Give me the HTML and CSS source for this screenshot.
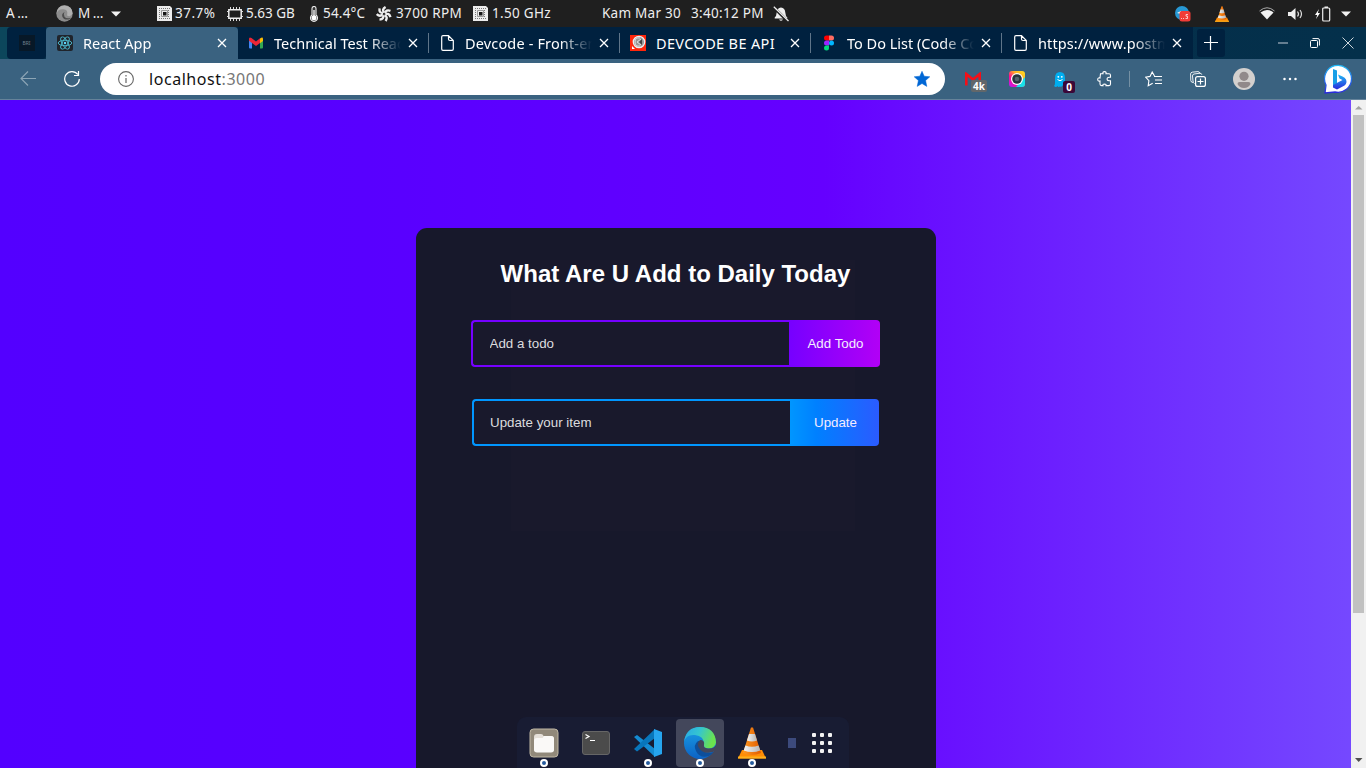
FILE: index.html
```html
<!DOCTYPE html>
<html lang="en">
<head>
<meta charset="utf-8">
<title>React App</title>
<link rel="stylesheet" href="styles.css">
</head>
<body>
<svg width="0" height="0" class="defs">
  <defs>
    <linearGradient id="edgeTop" x1="0" y1="0" x2="1" y2=".3"><stop offset="0" stop-color="#28a7e8"/><stop offset=".5" stop-color="#35c5d0"/><stop offset="1" stop-color="#6be34e"/></linearGradient>
    <linearGradient id="edgeLow" x1="0" y1="0" x2="0" y2="1"><stop offset="0" stop-color="#1aa0e6"/><stop offset="1" stop-color="#0c62c4"/></linearGradient>
    <linearGradient id="cone" x1="0" x2="1"><stop offset="0" stop-color="#ff9a20"/><stop offset="1" stop-color="#e05a00"/></linearGradient>
    <linearGradient id="coneBand" x1="0" x2="1"><stop offset="0" stop-color="#f4f4f4"/><stop offset="1" stop-color="#b5b5b5"/></linearGradient>
    <linearGradient id="bing" x1="0" y1="0" x2="0" y2="1"><stop offset="0" stop-color="#20b9f5"/><stop offset="1" stop-color="#2929dc"/></linearGradient>
    <linearGradient id="rainbow" x1="0" y1="1" x2="1" y2="0"><stop offset="0" stop-color="#b41cff"/><stop offset=".35" stop-color="#ff0c8e"/><stop offset=".65" stop-color="#ffb022"/><stop offset="1" stop-color="#ffe022"/></linearGradient>
    <symbol id="vlc" viewBox="0 0 28 32">
      <path d="M4 23h20l4 8.500H0z" fill="#ff8d05"/><path d="M0 29.500h28v2H0z" fill="#ffb01c"/>
      <path d="M13 .5h2L23 26q-9 4-18 0z" fill="url(#cone)"/>
      <path d="M11 7h6l2 6.500q-5 2-10 0z" fill="url(#coneBand)"/><path d="M7.400 18.500q6.600 2.500 13.200 0l1.700 5q-8.300 3.200-16.600 0z" fill="url(#coneBand)"/>
    </symbol>
    <symbol id="chip" viewBox="0 0 15 15"><path d="M0 0h13l2 2v13H0z" fill="#ececec"/><path d="M2 2.500h11M2 4.500h2M2 6.500h2M2 8.500h2M2 10.500h2M2 12.500h11M11 4.500h2M11 6.500h2M11 8.500h2M11 10.500h2" stroke="#777" stroke-dasharray="1 1"/><path d="M4.500 4.500h6v6h-6z" fill="#ececec" stroke="#999"/><path d="M6 6h3.500v3.500H6z" fill="#161616"/></symbol>
    <symbol id="close" viewBox="0 0 10 10"><path d="M1 1l8 8M9 1L1 9" stroke="#fff" stroke-width="1.300"/></symbol>
    <symbol id="page" viewBox="0 0 13 16"><path d="M.7 2q0-1.300 1.300-1.300h5.500l4.800 4.800V14q0 1.300-1.300 1.300H2Q.7 15.300.7 14zM7.500.7V4q0 1.500 1.500 1.500h3.300" fill="none" stroke="#fff" stroke-width="1.200"/></symbol>
  </defs>
</svg>
<div class="desktop">
  <header class="panel">
    <span class="ls-a">A…</span>
    <svg width="17" height="17" viewBox="0 0 32 32"><circle cx="16" cy="16" r="15.500" fill="#8c8c8c"/><path d="M1 16Q4 7 14 8q9 1 7 10-1 3 4 3 5-1 6-5 0-14-15-15Q3 1 1 16z" fill="#b0b0b0"/><path d="M16 13q-6 3-4 9 3 7 13 5 3-2 3-3-8 3-12-2-3-5 0-9z" fill="#4c4c4c"/></svg>
    <span class="ls-m">M…</span>
    <svg width="10" height="6"><path d="M0 .5h10L5 5.500z" fill="#f2f2f2"/></svg>
    <svg width="15" height="15"><use href="#chip"/></svg>
    <span class="pct">37.7%</span>
    <svg class="ram" width="16" height="14"><path d="M1.800 2.800h12.400v8.400H1.800z" fill="none" stroke="#eee" stroke-width="1.500"/><path d="M3.500 0v2M6.500 0v2M9.500 0v2M12.500 0v2M3.500 12v2M6.500 12v2M9.500 12v2M12.500 12v2" stroke="#ddd"/><path d="M0 4.500h1M0 9.500h1M15 4.500h1M15 9.500h1" stroke="#ddd"/></svg>
    <span class="mem">5.63 GB</span>
    <svg class="thermo" width="10" height="16"><path d="M3 2.500a2 2 0 0 1 4 0V9a3.500 3.500 0 1 1-4 0z" fill="#333" stroke="#eee" stroke-width="1.100"/><circle cx="5" cy="11.700" r="2.500" fill="#fff"/><path d="M5 4v7" stroke="#fff" stroke-width="1.300"/></svg>
    <span class="temp">54.4°C</span>
    <svg width="16" height="16" viewBox="-8 -8 16 16"><g fill="none" stroke="#efefef" stroke-width="2.400"><path id="blade" d="M.2-1.500Q-2.600-4.500 1.600-7"/><use href="#blade" transform="rotate(51)"/><use href="#blade" transform="rotate(103)"/><use href="#blade" transform="rotate(154)"/><use href="#blade" transform="rotate(206)"/><use href="#blade" transform="rotate(257)"/><use href="#blade" transform="rotate(309)"/></g></svg>
    <span class="rpm">3700 RPM</span>
    <svg width="15" height="15"><use href="#chip"/></svg>
    <span class="ghz">1.50 GHz</span>
    <span class="date">Kam Mar 30</span>
    <span class="time">3:40:12 PM</span>
    <svg width="16" height="16"><path d="M8 1.500q4 .5 4.300 5 .2 3.500 2 5V12.500H1.700v-1q1.800-1.500 2-5Q4 2 8 1.500zM6 13.500h4Q8 16 6 13.500z" fill="#eee"/><path d="M.8 1.500L15 15.500" stroke="#1f1f1f" stroke-width="3"/><path d="M.8.800L15.500 15" stroke="#eee" stroke-width="1.300"/></svg>
    <svg width="16" height="16"><circle cx="7" cy="7" r="7" fill="#2798d4"/><path d="M2 7l4-2v3z" fill="#fff"/><rect x="4.500" y="5" width="11" height="10.500" rx="2.500" fill="#f23c37"/><path d="M6 12.500h1M8 12.500h1M13 8.500h-2v1.700h1.500v2.300H10.500" stroke="#fff" stroke-width=".7" fill="none"/></svg>
    <svg width="14" height="16"><use href="#vlc"/></svg>
    <svg width="16" height="13"><path d="M.5 4Q8-2.500 15.500 4" fill="none" stroke="#aaa"/><path d="M1.500 5.500Q8 .5 14.500 5.500L8 12.500z" fill="#f2f2f2"/></svg>
    <svg width="16" height="14"><path d="M0 5h3l4.500-4v12L3 9H0z" fill="#eee"/><path d="M9.500 4.500q2 2.500 0 5M12 3q3 4 0 8" fill="none" stroke="#ddd" stroke-width="1.200"/></svg>
    <svg width="16" height="16"><path d="M4 3L0 9h2.200L1 13l4-6H2.800z" fill="#fff"/><path d="M7.700 3q0-1 1-1h5q1 0 1 1v11q0 1-1 1h-5q-1 0-1-1zM9.500 1h3.500" fill="none" stroke="#eee" stroke-width="1.200"/></svg>
    <svg width="10" height="6"><path d="M0 .5h10L5 5.500z" fill="#f2f2f2"/></svg>
  </header>

  <nav class="tabs">
    <div class="pinned"><span class="pin-icon">BRI</span></div>
    <div class="tab active">
      <svg width="16" height="16" viewBox="-8 -8 16 16"><rect x="-8" y="-8" width="16" height="16" rx="2" fill="#20242b"/><g fill="none" stroke="#4dbcd1" stroke-width=".9"><ellipse rx="6.800" ry="2.700"/><ellipse rx="6.800" ry="2.700" transform="rotate(60)"/><ellipse rx="6.800" ry="2.700" transform="rotate(120)"/></g><circle r="1.200" fill="#61dafb"/></svg>
      <span class="label">React App</span><svg class="x"><use href="#close"/></svg>
    </div>
    <div class="tab">
      <svg width="16" height="16"><path d="M1 3.500L4 6v7.500H2q-1 0-1-1z" fill="#4285f4"/><path d="M12 6l3-2.500v9q0 1-1 1h-2z" fill="#34a853"/><path d="M12 3.500q3-2 3 .5v2l-3 2.300z" fill="#fbbc04"/><path d="M1 4q0-2.500 2.500-1L8 6.500 12 3.300v4.800L8 11 4 8 1 5.800z" fill="#ea2535"/></svg>
      <span class="label">Technical Test Reac</span><svg class="x"><use href="#close"/></svg>
    </div>
    <div class="tab">
      <svg width="16" height="16"><use href="#page" width="13" height="16" x="2"/></svg>
      <span class="label t-dev">Devcode - Front-en</span><svg class="x"><use href="#close"/></svg>
    </div>
    <div class="tab">
      <svg width="16" height="16"><path d="M0 0h16v16H0z" fill="#ff260b"/><circle cx="9" cy="7" r="5.700" fill="#999" stroke="#eee" stroke-width="1.300"/><path d="M11 4L7 7l4 3M10 3q-5-1-5 4t5 4" fill="none" stroke="#ddd"/><path d="M9 7l3-3v6z" fill="#444"/><path d="M2 11l3 3H2z" fill="#fff"/></svg>
      <span class="label t-be">DEVCODE BE API</span><svg class="x"><use href="#close"/></svg>
    </div>
    <div class="tab">
      <svg width="16" height="16"><path d="M8 .5v5H5.500a2.500 2.500 0 0 1 0-5z" fill="#ff0000"/><path d="M8 .5h2.500a2.500 2.500 0 0 1 0 5H8z" fill="#ff6b61"/><path d="M8 5.500v5H5.500a2.500 2.500 0 0 1 0-5z" fill="#9a24ff"/><circle cx="10.500" cy="8" r="2.500" fill="#00b6ff"/><path d="M8 10.500V13a2.500 2.500 0 1 1-2.500-2.500z" fill="#00d97e"/></svg>
      <span class="label">To Do List (Code Co</span><svg class="x"><use href="#close"/></svg>
    </div>
    <div class="tab">
      <svg width="16" height="16"><use href="#page" width="13" height="16" x="2"/></svg>
      <span class="label t-url">https://www.postm</span><svg class="x"><use href="#close"/></svg>
    </div>
    <div class="newtab"><svg width="14" height="14"><path d="M6.500 0v14M0 6.500h14" stroke="#fff" stroke-width="1.200"/></svg></div>
    <div class="winctl">
      <svg width="10" height="10"><path d="M0 5h10" stroke="#8499a8" stroke-width="1.500"/></svg>
      <svg width="10" height="10"><path d="M.5 3.500q0-1 1-1h5q1 0 1 1v5q0 1-1 1h-5q-1 0-1-1zM2.500.6H8Q9.400.6 9.400 2v5.500" fill="none" stroke="#fff"/></svg>
      <svg width="12" height="12"><path d="M.5.500l11 11M11.500.500L.5 11.500" stroke="#ccd6dc"/></svg>
    </div>
  </nav>

  <div class="toolbar">
    <svg width="16" height="16"><path d="M16 7.500H1M8 .5l-7 7 7 7" fill="none" stroke="#8da5b5" stroke-width="1.100"/></svg>
    <svg width="16" height="16"><path d="M13.800 3.500A7.300 7.300 0 1 0 15.300 8M14.500 0v4.500H10" fill="none" stroke="#fff" stroke-width="1.200"/></svg>
    <div class="address">
      <svg width="16" height="16"><circle cx="8" cy="8" r="7.400" fill="none" stroke="#666" stroke-width="1.100"/><path d="M8 7v5M8 4v1.400" stroke="#666" stroke-width="1.200"/></svg>
      <span class="url">localhost<span>:3000</span></span>
      <svg class="fav" width="16" height="16"><path d="M8 .3l2.200 4.900 5.600.6-4.200 3.700 1.200 5.900L8 12.500l-4.800 2.900 1.200-5.900L.2 5.800l5.600-.6z" fill="#0067d5" stroke="#0067d5" stroke-linejoin="round" stroke-width=".5"/></svg>
    </div>
    <div class="ext"><svg width="16" height="14"><path d="M1.300 13.500V2L8 7.500 14.700 2v11.500" fill="none" stroke="#f40f18" stroke-width="2.600"/></svg><b class="badge grey">4k</b></div>
    <svg width="16" height="16"><rect width="16" height="16" rx="3" fill="url(#rainbow)"/><path d="M16 6v7q0 3-3 3H7z" fill="#18dfe9"/><circle cx="8" cy="8" r="6" fill="#fff"/><circle cx="8" cy="8" r="4.800" fill="#26353e"/><circle cx="8" cy="8" r="2.300" fill="#52636d"/></svg>
    <div class="ext"><svg width="12" height="15"><path d="M1 6q0-6 5-6t5 6v8q-1.500.5-2-1-1 2.500-3 1.500-2 1-2.500-.5-1.500 2-3.500 0 1-1 1-3z" fill="#00aef0"/><circle cx="4.300" cy="4.800" r=".9" fill="#fff"/><circle cx="7.800" cy="4.800" r=".9" fill="#fff"/><path d="M3.500 7.500Q6 10 8.500 7.500" fill="none" stroke="#fff"/></svg><b class="badge plum">0</b></div>
    <svg width="16" height="16"><path d="M3.500 2.700H6Q5.500.6 7.500.6T9 2.700h3q1.500 0 1.500 1.500v2H12q-2 .2-2 1.800t2 1.800h1.500v3.300q0 1.500-1.500 1.500H9q.5-1.500-1.500-1.500T6 14.600H4.500Q3 14.600 3 13v-3Q.7 10.500.7 8.500T3 7z" fill="none" stroke="#fff" stroke-width="1.100"/></svg>
    <i class="divider"></i>
    <svg width="17" height="16"><path d="M9.500 5L7.200 1 5 5.400l-4.400.8 3.300 3.500-.7 5 4.500-2.500M9 5.500h8M10 9h7M10 12.500h7" fill="none" stroke="#fff" stroke-width="1.100"/></svg>
    <svg width="16" height="16"><path d="M3 11.500Q1 11.500.8 9.500L.6 3q0-1.500 1.500-1.800L8 .6q1.500 0 1.800 1.800M4.500 12.500Q3.200 12 3 10L2.500 5Q2.500 3.200 4 3l6-.8q1.500 0 1.800 1.500" fill="none" stroke="#fff" stroke-width=".9"/><rect x="5.600" y="5.600" width="9.800" height="9.800" rx="2" fill="#3a6280" stroke="#fff" stroke-width="1.200"/><path d="M10.500 7.500v6M7.500 10.500h6" stroke="#fff" stroke-width="1.200"/></svg>
    <svg width="22" height="22"><circle cx="11" cy="11" r="11" fill="#d3d0ce"/><circle cx="11" cy="8.300" r="4.600" fill="#91898a"/><path d="M4.500 16q0-2 2-2h9q2 0 2 2-2 4-6.500 4t-6.500-4z" fill="#91898a"/></svg>
    <svg width="14" height="4"><g fill="#fff"><circle cx="1.500" cy="2" r="1.250"/><circle cx="7" cy="2" r="1.250"/><circle cx="12.500" cy="2" r="1.250"/></g></svg>
    <svg class="bing" width="30" height="30"><path d="M1 29l1-8A13.500 13.500 0 1 1 11 28z" fill="#fff" stroke="url(#bing)" stroke-width="1.300"/><path d="M9 5l4 1.500v14L9 23z" fill="#189fe7"/><path d="M14 10.500l1.500 4 3 1.500-9.500 5v2.500l4 2 7.500-4q3-2.500 1.500-6-1-2-3.500-3z" fill="url(#bing)"/></svg>
  </div>

  <main class="viewport">
    <div class="page">
      <section class="card">
        <h1>What Are U Add to Daily Today</h1>
        <form class="todo-form add">
          <input type="text" placeholder="Add a todo"><button type="button">Add Todo</button>
        </form>
        <form class="todo-form edit">
          <input type="text" placeholder="Update your item"><button type="button">Update</button>
        </form>
      </section>
    </div>
    <div class="scrollbar">
      <svg width="15" height="15"><path d="M4 9.500h7.500L7.700 6z" fill="#a3a3a3"/></svg>
      <i class="thumb"></i>
      <svg class="down" width="15" height="15"><path d="M4 5h7.500L7.700 9z" fill="#505050"/></svg>
    </div>
  </main>

  <aside class="dock">
    <div class="app run"><svg width="30" height="30"><rect x="1" y="1" width="28" height="28" rx="3.500" fill="#91897a" stroke="#c0b8a5"/><path d="M5 9q0-3 3-3h4q2 0 2.500 2H22q3 0 3 3v10q0 3-3 3H8q-3 0-3-3z" fill="#e5e0d9"/><rect x="5" y="10" width="20" height="14.500" rx="3" fill="#faf9f7"/><path d="M13 11l2-3h7q3 0 3 3v4H13z" fill="#faf9f7"/></svg></div>
    <div class="app"><svg width="30" height="26"><rect x="1.500" y="1.500" width="27" height="23" rx="2.500" fill="#4b4b4b" stroke="#666"/><path d="M4.500 4.500l3.500 2-3.500 2M9 10.500h5" fill="none" stroke="#fff" stroke-width="1.200"/></svg></div>
    <div class="app run"><svg width="30" height="28"><path d="M1 8l3-2 18 14v8z" fill="#148bd2"/><path d="M1 20l3 2.500L22 9V0z" fill="#0876bb"/><path d="M21 0l8 3v22l-8 3z" fill="#26a5ef"/></svg></div>
    <div class="app run current"><svg width="32" height="32"><circle cx="16" cy="16" r="16" fill="url(#edgeLow)"/><path d="M0 15Q2 7 11 8q9 1 9 9-1 4 4 4.500 7 0 8-6Q31 0 16 0 2 0 0 15z" fill="url(#edgeTop)"/><path d="M14 14q-5 4-2 10 4 8 13 5 3-1.500 4.500-4Q21 28 16 21q-2-4-.5-7z" fill="#0d4f9c"/><path d="M16 13q-4 4-1 8 4 6 11 4.500 3-.5 4.500-1.500L32 22V18q-2 4-8 3.500-5-.5-4-3.500 1-5-4-5z" fill="#43475b"/></svg></div>
    <div class="app run"><svg width="28" height="32"><use href="#vlc"/></svg></div>
    <i class="mini"></i>
    <div class="grid"><i></i><i></i><i></i><i></i><i></i><i></i><i></i><i></i><i></i></div>
  </aside>
</div>
</body>
</html>
```
FILE: styles.css
```css
* { box-sizing: border-box; }
body { margin: 0; overflow: hidden; font-family: "Noto Sans", sans-serif; }
svg { display: block; flex: none; }
.defs { position: absolute; }
.desktop { position: relative; width: 1366px; height: 768px; display: flex; flex-direction: column; overflow: hidden; }

.panel {
  height: 27px; background: #1f1f1f; color: #eee; font-size: 13.5px; white-space: nowrap;
  padding-left: 6px; display: grid; align-items: center; line-height: 27px; flex: none;
  grid-template-columns: 50px 22px 33px 46px 18px 53px 18px 64px 13px 53px 20px 77px 19px 110px 89px 82px 402px 40px 44px 29px 27px 26px 15px;
}
.ls-a { letter-spacing: 2.500px; }
.ls-m { letter-spacing: 2.500px; }
.pct { letter-spacing: .5px; }
.rpm { letter-spacing: .35px; }
.temp { letter-spacing: .2px; }
.ghz, .time { letter-spacing: .3px; }
.date { letter-spacing: .25px; }
.ram, .thermo { margin-left: -1px; }

.tabs { height: 32px; flex: none; display: flex; padding-left: 7px; background: linear-gradient(90deg, #0c465b 0, #0c465b 7px, #052b47 60px, #04304b); }
.pinned { width: 39px; background: #00213f; border-radius: 4px 0 4px 4px; display: flex; align-items: center; justify-content: center; }
.pin-icon { width: 16px; height: 16px; background: #071827; color: #718290; font-size: 5px; line-height: 16px; text-align: center; }
.tab { width: 191px; display: flex; align-items: center; padding: 0 10px; gap: 10px; background: #00213f; color: #fff; }
.tab.active { width: 192px; background: #3a6280; border-radius: 4px 4px 0 0; padding-left: 11px; }
.tab:not(.active) + .tab::before { content: ""; width: 1px; height: 20px; background: #5f7589; margin-left: -11px; }
.label { flex: 1; white-space: nowrap; overflow: hidden; font-size: 14.5px; line-height: 30px; height: 31px; -webkit-mask-image: linear-gradient(90deg, #000 95px, transparent 127px); mask-image: linear-gradient(90deg, #000 95px, transparent 127px); }
.label.t-be { letter-spacing: .35px; -webkit-mask-image: none; mask-image: none; }
.t-dev { letter-spacing: .15px; }
.t-url { letter-spacing: .1px; }
.x { width: 10px; height: 10px; margin: 0 1px 0 -5px; }
.newtab { width: 28px; height: 28px; margin: 2px 53px 0 4px; background: #00213f; border-radius: 3px; display: flex; align-items: center; justify-content: center; }
.winctl { display: flex; align-items: center; gap: 22px; }

.toolbar {
  height: 41px; flex: none; background: #3a6280; border-bottom: 1px solid #65839a; padding-left: 20px;
  display: grid; align-items: center;
  grid-template-columns: 44px 36px 865px 44px 45px 43px 32px 16px 45px 43px 50px 41px 30px;
}
.address { width: 845px; height: 32px; border-radius: 16px; background: #fff; display: flex; align-items: center; padding: 0 15px 0 18px; gap: 15px; }
.url { font-size: 16px; letter-spacing: .55px; color: #111; }
.url span { color: #777; }
.fav { margin-left: auto; }
.ext { position: relative; }
.badge { position: absolute; color: #fff; font: bold 10px/12px "Noto Sans", sans-serif; border-radius: 2px; height: 12px; text-align: center; }
.grey { left: 6px; top: 8px; width: 16px; background: #62676a; }
.plum { left: 9px; top: 9px; width: 12px; background: #3b0838; }
.divider { width: 1px; height: 16px; background: #7590a3; }

.viewport { flex: 1; display: flex; min-height: 0; }
.page { flex: 1; padding-top: 128px; display: flex; justify-content: center; background: linear-gradient(90deg, #5300ff 0, #5800ff 27%, #6500ff 61%, #7548ff 100%); }
.card { position: relative; width: 520px; background: #17182b; border-radius: 11px 11px 0 0; display: flex; flex-direction: column; align-items: center; padding-top: 32px; font-family: "Liberation Sans", sans-serif; }
.card::before { content: ""; position: absolute; left: 95px; top: 32px; width: 344px; height: 271px; background: #19192c; }
.card > * { position: relative; }
.card h1 { margin: 0 0 32px; color: #fff; font-size: 24px; line-height: 28px; }
.todo-form { display: flex; height: 47px; margin-bottom: 32px; }
.todo-form input { width: 318px; border: 2px solid #7600ff; border-right: 0; border-radius: 4px 0 0 4px; background: #19192c; padding: 0 16px; font: 13.333px "Liberation Sans", sans-serif; outline: none; }
.todo-form input::placeholder { color: #dcdcdf; opacity: 1; }
.todo-form button { border: 0; border-radius: 0 4px 4px 0; color: #f4ecff; padding: 0 0 0 2px; font: 13.333px "Liberation Sans", sans-serif; }
.add input { padding-left: 16.5px; }
.add button { width: 91px; background: linear-gradient(90deg, #7600ff, #b200f6); }
.edit input { border-color: #0096ff; }
.edit button { width: 89px; background: linear-gradient(90deg, #0096ff, #0080ff 30%, #2b5bff); }

.scrollbar { width: 15px; background: #f1f1f1; display: flex; flex-direction: column; align-items: center; }
.thumb { width: 11px; height: 498px; background: #c1c1c1; }
.down { margin-top: auto; }

.dock { position: absolute; left: 517px; top: 717px; width: 332px; height: 51px; background: #181c33; border-radius: 9px 9px 0 0; padding: 2px 0 0 3px; display: flex; gap: 4px; }
.app { position: relative; width: 48px; height: 48px; border-radius: 4px; display: flex; align-items: center; justify-content: center; }
.current { background: #43475b; }
.run::after { content: ""; position: absolute; box-sizing: border-box; left: 20px; top: 40px; width: 8px; height: 8px; border: 2px solid #fff; border-radius: 50%; background: #255b9e; }
.mini { width: 8px; height: 10px; margin: 19px 0 0 8px; background: #3c4a7c; }
.grid { display: grid; grid-template-columns: repeat(3, 4px); grid-auto-rows: 4px; gap: 4px; margin: 14px 0 0 12px; }
.grid i { background: #f2f2f2; border-radius: 1px; }
```
